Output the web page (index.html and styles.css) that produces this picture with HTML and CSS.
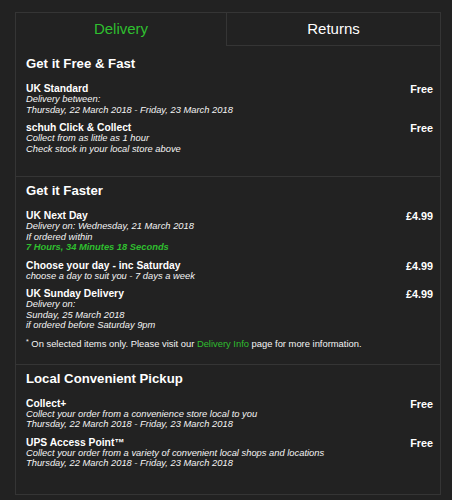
FILE: index.html
```html
<!DOCTYPE html>
<html lang="en">
<head>
<meta charset="utf-8">
<link rel="stylesheet" href="styles.css">
</head>
<body>
<div class="box">
  <div class="tabs">
    <div class="tab active">Delivery</div>
    <div class="tab">Returns</div>
  </div>
  <div class="panel">
    <section class="group first">
      <h2 class="group-title">Get it Free &amp; Fast</h2>
      <div class="item">
        <div class="info">
          <div class="name">UK Standard</div>
          <div class="detail">Delivery between:</div>
          <div class="detail">Thursday, 22 March 2018 - Friday, 23 March 2018</div>
        </div>
        <div class="price">Free</div>
      </div>
      <div class="item">
        <div class="info">
          <div class="name">schuh Click &amp; Collect</div>
          <div class="detail">Collect from as little as 1 hour</div>
          <div class="detail">Check stock in your local store above</div>
        </div>
        <div class="price">Free</div>
      </div>
    </section>
    <section class="group">
      <h2 class="group-title">Get it Faster</h2>
      <div class="item">
        <div class="info">
          <div class="name">UK Next Day</div>
          <div class="detail">Delivery on: Wednesday, 21 March 2018</div>
          <div class="detail">If ordered within</div>
          <div class="detail countdown">7 Hours, 34 Minutes 18 Seconds</div>
        </div>
        <div class="price">£4.99</div>
      </div>
      <div class="item">
        <div class="info">
          <div class="name">Choose your day - inc Saturday</div>
          <div class="detail">choose a day to suit you - 7 days a week</div>
        </div>
        <div class="price">£4.99</div>
      </div>
      <div class="item">
        <div class="info">
          <div class="name">UK Sunday Delivery</div>
          <div class="detail">Delivery on:</div>
          <div class="detail">Sunday, 25 March 2018</div>
          <div class="detail">if ordered before Saturday 9pm</div>
        </div>
        <div class="price">£4.99</div>
      </div>
      <p class="note"><sup class="star">*</sup> On selected items only. Please visit our <a class="link" href="#">Delivery Info</a> page for more information.</p>
    </section>
    <section class="group last">
      <h2 class="group-title">Local Convenient Pickup</h2>
      <div class="item">
        <div class="info">
          <div class="name">Collect+</div>
          <div class="detail">Collect your order from a convenience store local to you</div>
          <div class="detail">Thursday, 22 March 2018 - Friday, 23 March 2018</div>
        </div>
        <div class="price">Free</div>
      </div>
      <div class="item">
        <div class="info">
          <div class="name">UPS Access Point™</div>
          <div class="detail">Collect your order from a variety of convenient local shops and locations</div>
          <div class="detail">Thursday, 22 March 2018 - Friday, 23 March 2018</div>
        </div>
        <div class="price">Free</div>
      </div>
    </section>
  </div>
</div>
</body>
</html>
```

FILE: styles.css
```css
html, body {
  margin: 0;
  background: #222222;
}
body {
  padding: 12px 0 0 15px;
  font-family: "Liberation Sans", Arial, sans-serif;
  color: #ffffff;
}
.box {
  width: 426px;
  box-sizing: border-box;
  border: 1px solid #353535;
}
.tabs {
  display: flex;
}
.tab {
  height: 32px;
  line-height: 32px;
  text-align: center;
  font-size: 15px;
  color: #ffffff;
}
.tab.active {
  width: 210px;
  color: #2fbf2f;
}
.tab:not(.active) {
  flex: 1;
  border-left: 1px solid #353535;
  border-bottom: 1px solid #353535;
}
.panel {
  padding: 3px 0 3px 0;
}
.group {
  padding: 6px 7px 15px 10px;
  border-top: 1px solid #353535;
}
.group.first {
  border-top: none;
  padding-top: 7px;
}
.group-title {
  margin: 0 0 11px 0;
  font-size: 13.2px;
  line-height: 16px;
  font-weight: bold;
}
.item {
  display: flex;
  justify-content: space-between;
  align-items: flex-start;
  margin-bottom: 7px;
}
.name {
  font-size: 10.3px;
  line-height: 11px;
  font-weight: bold;
}
.detail {
  font-size: 9.35px;
  line-height: 10.5px;
  font-style: italic;
  color: #f4f4f4;
}
.detail.countdown {
  color: #2fbf2f;
  font-weight: bold;
}
.price {
  font-size: 10.8px;
  line-height: 12px;
  font-weight: bold;
}
.note {
  margin: 3px 0 0 0;
  font-size: 9.4px;
  line-height: 11px;
  color: #f4f4f4;
}
.star {
  font-size: 7px;
  vertical-align: 3px;
  line-height: 0;
}
.link {
  color: #2fbf2f;
  text-decoration: none;
}
```
